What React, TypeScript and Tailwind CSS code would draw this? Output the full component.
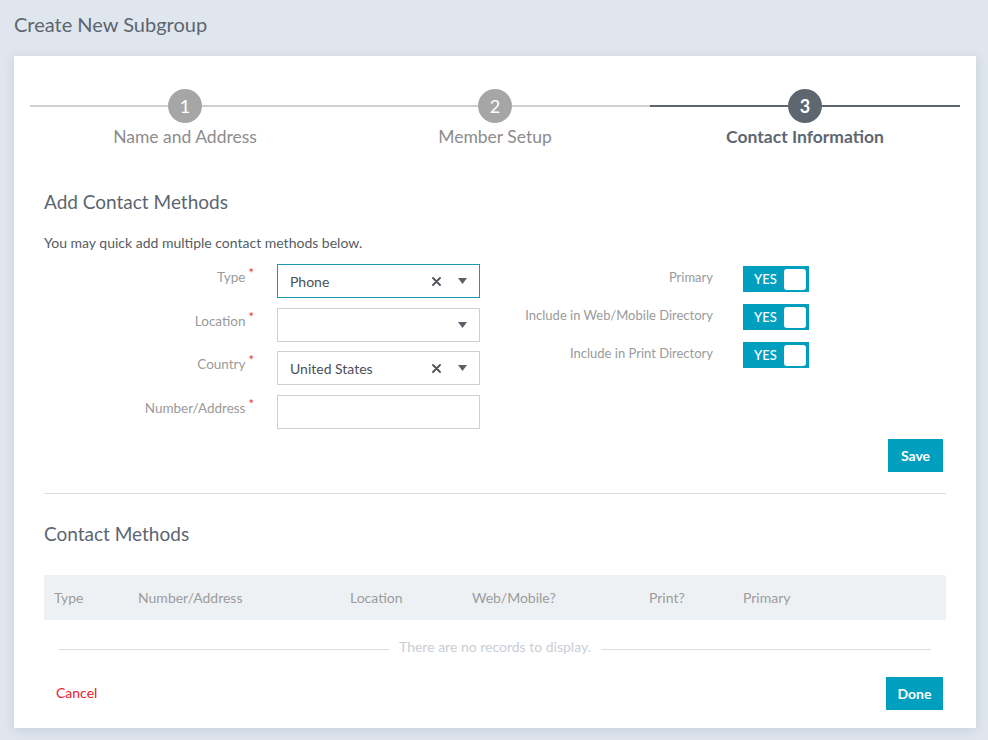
import React from "react";

const Star = () => <span className="text-[#e8313a] text-[13px] ml-[3px] relative -top-[4px]">*</span>;

function Caret() {
  return (
    <svg width="9" height="6" viewBox="0 0 9 6" className="ml-[17px]">
      <path d="M0 0 L9 0 L4.5 6 Z" fill="#5a6068" />
    </svg>
  );
}

function Cross() {
  return (
    <svg width="9" height="9" viewBox="0 0 9 9">
      <path d="M1 1 L8 8 M8 1 L1 8" stroke="#4d535a" strokeWidth="1.8" strokeLinecap="round" />
    </svg>
  );
}

function SelectBox({ value, clear, active }: { value?: string; clear?: boolean; active?: boolean }) {
  return (
    <div
      className={`w-[203px] h-[34px] flex items-center pl-[12px] pr-[12px] bg-white border ${
        active ? "border-[#1b98b2]" : "border-[#cdd0d4]"
      }`}
    >
      <span className="flex-1 text-[14px] text-[#4a5159]">{value}</span>
      {clear && <Cross />}
      <Caret />
    </div>
  );
}

function FieldRow({ label, children }: { label: string; children: React.ReactNode }) {
  return (
    <div className="flex items-start">
      <div className="w-[214px] text-right pr-[4px] pt-[4px] text-[13.5px] text-[#9a9a9a] leading-[18px]">
        {label}
        <Star />
      </div>
      <div className="ml-[19px]">{children}</div>
    </div>
  );
}

function Toggle() {
  return (
    <div className="w-[66px] h-[26px] bg-[#009fbf] flex items-center justify-between pl-[11px] pr-[3px]">
      <span className="text-white text-[13px] font-medium">YES</span>
      <span className="w-[22px] h-[21px] bg-white rounded-[3px]" />
    </div>
  );
}

function ToggleRow({ label }: { label: string }) {
  return (
    <div className="flex items-start">
      <div className="w-[213px] text-right pt-[2px] text-[13px] text-[#9a9a9a] leading-[18px]">{label}</div>
      <div className="ml-[30px]">
        <Toggle />
      </div>
    </div>
  );
}

function Step({ n, label, state }: { n: number; label: string; state: "done" | "active" }) {
  const active = state === "active";
  return (
    <div className="flex-1 relative flex flex-col items-center">
      <div className={`absolute left-0 right-0 top-[16px] h-[2px] ${active ? "bg-[#5e6770]" : "bg-[#d0d0d0]"}`} />
      <div
        className={`relative w-[34px] h-[34px] rounded-full flex items-center justify-center text-white text-[18px] ${
          active ? "bg-[#5e6770] font-bold" : "bg-[#a6a6a6]"
        }`}
      >
        {n}
      </div>
      <div
        className={`mt-[1px] text-[17.5px] ${active ? "text-[#5e6770] font-bold" : "text-[#8c8c8c]"}`}
      >
        {label}
      </div>
    </div>
  );
}

export default function App() {
  const cols = [
    { t: "Type", w: "w-[84px]" },
    { t: "Number/Address", w: "w-[212px]" },
    { t: "Location", w: "w-[122px]" },
    { t: "Web/Mobile?", w: "w-[177px]" },
    { t: "Print?", w: "w-[94px]" },
    { t: "Primary", w: "flex-1" },
  ];
  return (
    <div
      className="w-[988px] h-[740px] bg-[#e0e6ee] overflow-hidden"
      style={{ fontFamily: "Lato, 'Open Sans', sans-serif" }}
    >
      <div className="h-[56px] px-[14px] flex items-center">
        <h1 className="text-[20px] text-[#5c6570] -mt-[8px]">Create New Subgroup</h1>
      </div>
      <div className="ml-[14px] w-[962px] bg-white h-[672px] shadow-[0_2px_10px_rgba(80,100,130,0.18)] flex flex-col">
        {/* Stepper */}
        <div className="px-[16px] pt-[33px] flex">
          <Step n={1} label="Name and Address" state="done" />
          <Step n={2} label="Member Setup" state="done" />
          <Step n={3} label="Contact Information" state="active" />
        </div>

        <div className="px-[30px]">
          <h2 className="mt-[40px] text-[19px] text-[#5c6570] leading-[24px]">Add Contact Methods</h2>
          <p className="mt-[20px] text-[14px] text-[#555c63] leading-[18px]">
            You may quick add multiple contact methods below.
          </p>

          <div className="flex mt-[12px]">
            <div className="flex flex-col gap-[9.5px]">
              <FieldRow label="Type">
                <SelectBox value="Phone" clear active />
              </FieldRow>
              <FieldRow label="Location">
                <SelectBox />
              </FieldRow>
              <FieldRow label="Country">
                <SelectBox value="United States" clear />
              </FieldRow>
              <FieldRow label="Number/Address">
                <div className="w-[203px] h-[34px] border border-[#cdd0d4] bg-white" />
              </FieldRow>
            </div>
            <div className="ml-[20px] mt-[2px] flex flex-col gap-[12px]">
              <ToggleRow label="Primary" />
              <ToggleRow label="Include in Web/Mobile Directory" />
              <ToggleRow label="Include in Print Directory" />
            </div>
          </div>

          <div className="flex justify-end mt-[10px] pr-[3px]">
            <button className="w-[55px] h-[33px] bg-[#009fbf] text-white text-[14px] font-bold">Save</button>
          </div>

          <div className="mt-[21px] h-px bg-[#dcdfe2]" />

          <h2 className="mt-[28px] text-[19px] text-[#5c6570] leading-[24px]">Contact Methods</h2>

          <div className="mt-[29px] h-[45px] bg-[#eef1f4] flex items-center pl-[10px] rounded-tr-[3px]">
            {cols.map((c) => (
              <div key={c.t} className={`${c.w} text-[14px] text-[#9c9c9c]`}>
                {c.t}
              </div>
            ))}
          </div>

          <div className="flex items-center px-[15px] h-[54px]">
            <div className="flex-1 h-px bg-[#dcdfe2] mt-[5px]" />
            <div className="px-[10px] text-[14px] text-[#c9ced4]">There are no records to display.</div>
            <div className="flex-1 h-px bg-[#dcdfe2] mt-[5px]" />
          </div>

          <div className="flex items-center justify-between mt-[3px] pl-[12px] pr-[3px]">
            <span className="text-[14px] text-[#e8202a] -mt-[2px]">Cancel</span>
            <button className="w-[57px] h-[33px] bg-[#009fbf] text-white text-[14px] font-bold">Done</button>
          </div>
        </div>
      </div>
    </div>
  );
}
